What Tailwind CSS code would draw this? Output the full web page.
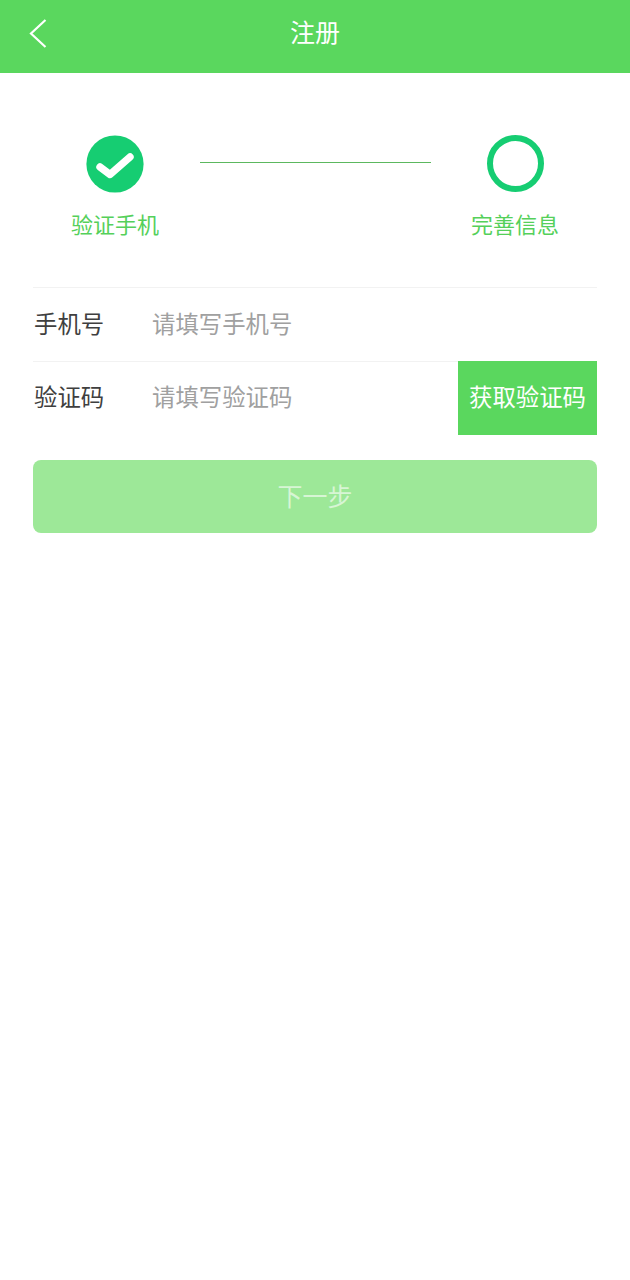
<!DOCTYPE html>
<html lang="zh-CN">
<head>
<meta charset="utf-8">
<script src="https://cdn.jsdelivr.net/npm/@tailwindcss/browser@4"></script>
</head>
<body class="bg-white font-['Noto_Sans_CJK_SC',sans-serif]">
<div class="w-[630px] h-[1280px] bg-white overflow-hidden">
  <header class="relative h-[73px] bg-[#5ad75e] flex items-center justify-center">
    <svg class="absolute left-[28px] top-[19px]" width="20" height="30" viewBox="0 0 20 30" fill="none"><path d="M17.5 1 L3 14.5 L17.5 28" stroke="#fff" stroke-width="2.2"/></svg>
    <h1 class="text-[25px] leading-none text-white mb-[11px]">注册</h1>
  </header>
  <section class="flex items-start pt-[62px] h-[214px]">
    <div class="w-[230px] flex flex-col items-center">
      <svg width="58" height="58" viewBox="0 0 58 58"><circle cx="29" cy="29" r="28.6" fill="#16cd72"/><path d="M14 32 L24 39.5 L44 22" fill="none" stroke="#fff" stroke-width="7.4" stroke-linecap="round" stroke-linejoin="round"/></svg>
      <span class="mt-[16px] text-[22px] leading-[28px] text-[#55d05a]">验证手机</span>
    </div>
    <div class="w-[231px] h-px bg-[#5cb85f] mt-[27px] -ml-[30px]"></div>
    <div class="w-[170px] flex flex-col items-center -ml-[1px]">
      <div class="w-[57px] h-[57px] rounded-full border-[6px] border-[#16cd72]"></div>
      <span class="mt-[17px] text-[22px] leading-[28px] text-[#55d05a]">完善信息</span>
    </div>
  </section>
  <main class="ml-[33px] w-[564px]">
    <div class="h-[74px] border-t border-[#f2f2f2] flex items-center text-[23.4px]">
      <span class="w-[119px] pl-px text-[#3f3f3f] -mt-[2px]">手机号</span>
      <span class="text-[#a0a0a0] -mt-[2px]">请填写手机号</span>
    </div>
    <div class="h-[74px] border-t border-[#f2f2f2] flex items-center text-[23.4px]">
      <span class="w-[119px] pl-px text-[#3f3f3f] -mt-[3px]">验证码</span>
      <span class="flex-1 text-[#a0a0a0] -mt-[3px]">请填写验证码</span>
      <span class="w-[139px] h-[74px] -mt-px pb-[3px] bg-[#5ad75e] text-white flex items-center justify-center">获取验证码</span>
    </div>
    <button class="mt-[25px] w-full h-[73px] pb-[2px] rounded-[8px] bg-[#9de898] text-[25px] text-white/60 flex items-center justify-center">下一步</button>
  </main>
</div>
</body>
</html>
